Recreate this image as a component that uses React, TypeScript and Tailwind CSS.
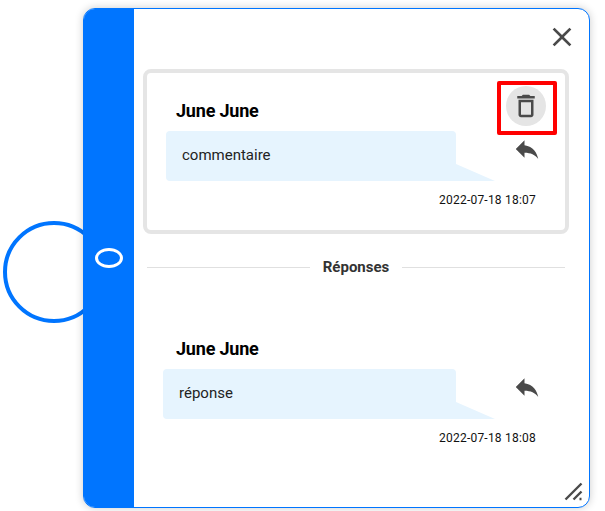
const font = { fontFamily: "Roboto, sans-serif" };

function Close() {
  return (
    <svg width="32" height="32" viewBox="0 0 24 24" fill="#4a4a4a">
      <path d="M19 6.41 17.59 5 12 10.59 6.41 5 5 6.41 10.59 12 5 17.59 6.41 19 12 13.41 17.59 19 19 17.59 13.41 12z" />
    </svg>
  );
}

function Reply() {
  return (
    <svg width="30" height="30" viewBox="0 0 24 24" fill="#4a4a4a">
      <path d="M10 9V5l-7 7 7 7v-4.1c5 0 8.5 1.6 11 5.1-1-5-4-10-11-11z" />
    </svg>
  );
}

function Trash() {
  return (
    <svg width="30" height="30" viewBox="0 0 24 24" fill="#4a4a4a">
      <path d="M6 19c0 1.1.9 2 2 2h8c1.1 0 2-.9 2-2V7H6v12zM8 9h8v10H8V9zm7.5-5l-1-1h-5l-1 1H5v2h14V4z" />
    </svg>
  );
}

function Comment({ text, date, bubbleClass, dateClass }: { text: string; date: string; bubbleClass: string; dateClass: string }) {
  return (
    <div className="flex flex-col">
      <div className="pl-[29px] text-[18px] leading-[24px] font-bold tracking-[-0.2px] text-black">June June</div>
      <div className="mt-[8px] flex items-start">
        <div className={`flex h-[50px] items-center rounded-l-[4px] rounded-tr-[4px] bg-[#e6f4fe] pb-[2px] pl-[16px] text-[15px] text-[#222222] ${bubbleClass}`}>
          {text}
        </div>
        <div className="mt-[33px] h-0 w-0 border-r-[39px] border-b-[17px] border-r-transparent border-b-[#e6f4fe]" />
        <div className="mt-[4px] ml-[17px] -translate-y-[1px]">
          <Reply />
        </div>
      </div>
      <div className={`mt-[11px] text-right text-[12px] leading-[16px] tracking-[0.22px] text-[#111111] ${dateClass}`}>{date}</div>
    </div>
  );
}

export default function App() {
  return (
    <div className="relative h-[511px] w-[605px] overflow-hidden bg-white pt-[8px] pl-[83px]" style={font}>
      <div className="absolute top-[221px] left-[3px] h-[102px] w-[102px] rounded-full border-4 border-[#0075ff]" />
      <div className="relative flex h-[500px] w-[507px] overflow-hidden rounded-[12px] border border-[#0075ff] bg-white shadow-[0_0_8px_rgba(0,0,0,0.2)]">
        <div className="flex w-[50px] shrink-0 items-center justify-center bg-[#0075ff]">
          <div className="h-[20px] w-[28px] rounded-[50%] border-[3px] border-white" />
        </div>
        <div className="flex flex-1 flex-col pl-[9px]">
          <div className="flex h-[60px] justify-end pt-[12px] pr-[11px]">
            <Close />
          </div>
          <div className="relative h-[165px] w-[426px] rounded-[8px] border-4 border-[#e5e5e5] pt-[26px]">
            <Comment text="commentaire" date="2022-07-18 18:07" bubbleClass="ml-[19px] w-[290px]" dateClass="pr-[29px]" />
            <div className="absolute top-[8px] right-[8px] flex h-[54px] w-[60px] items-center justify-center rounded-[2px] border-4 border-[#ff0000]">
              <div className="flex h-[40px] w-[40px] -translate-x-[1px] -translate-y-[2px] items-center justify-center rounded-full bg-[#e5e5e5]">
                <Trash />
              </div>
            </div>
          </div>
          <div className="mt-[23px] flex w-[426px] items-center gap-[13px] px-[4px]">
            <div className="h-px flex-1 bg-[#e0e0e0]" />
            <span className="text-[15px] leading-[20px] font-bold text-[#333333]">Réponses</span>
            <div className="h-px flex-1 bg-[#e0e0e0]" />
          </div>
          <div className="mt-[60px] w-[426px] pl-[4px]">
            <Comment text="réponse" date="2022-07-18 18:08" bubbleClass="ml-[16px] w-[293px]" dateClass="pr-[33px]" />
          </div>
        </div>
        <svg className="absolute right-[6px] bottom-[6px]" width="20" height="20" viewBox="0 0 20 20" stroke="#4a4a4a" strokeWidth="2.4" fill="none">
          <path d="M2.5 18.5 18.5 2.5M10.5 18.5l8-8" />
          <path d="M16.5 18h2" />
        </svg>
      </div>
    </div>
  );
}
